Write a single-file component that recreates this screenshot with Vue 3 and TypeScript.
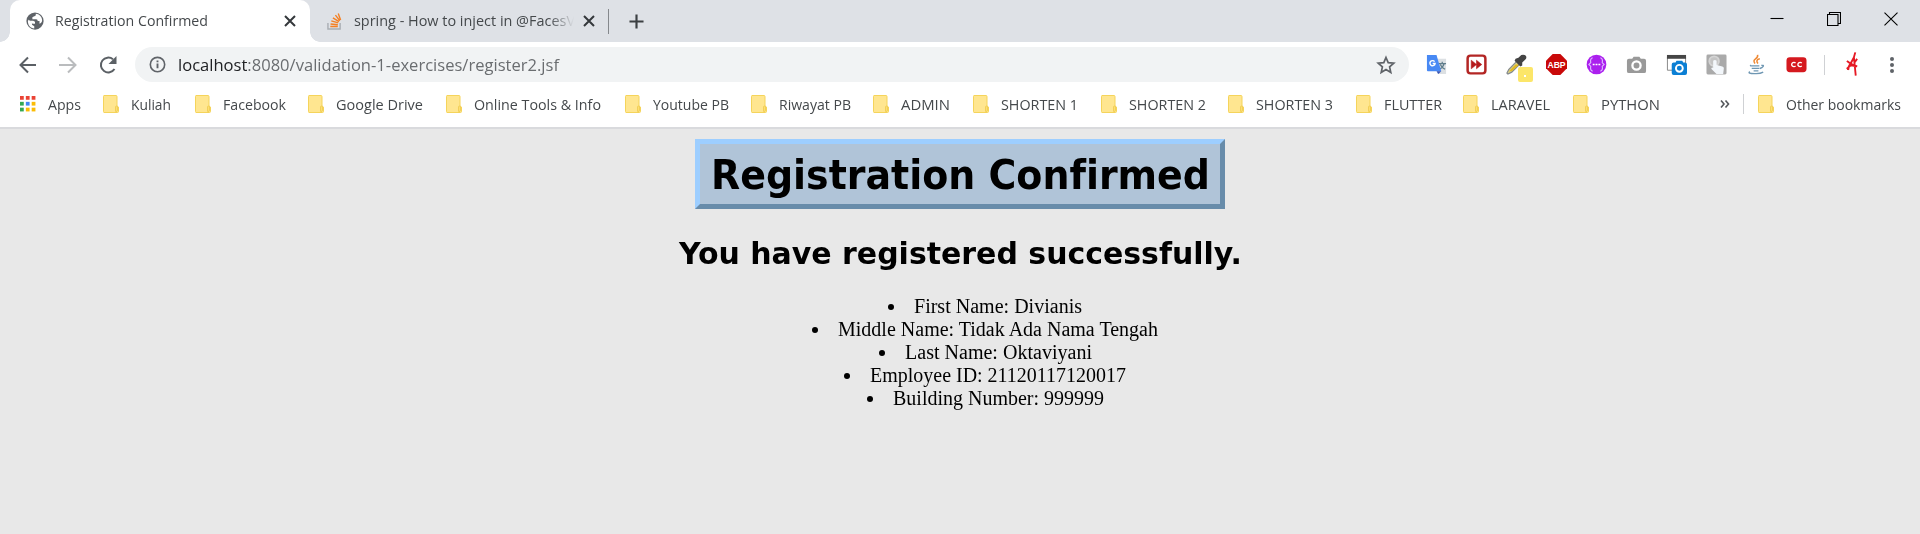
<script setup lang="ts">
interface Bookmark {
  label: string
  textWidth: number
  slot: number
}

interface Detail {
  label: string
  value: string
  width: number
}

const bookmarks: Bookmark[] = [
  { label: 'Kuliah', textWidth: 40, slot: 92 },
  { label: 'Facebook', textWidth: 63, slot: 113 },
  { label: 'Google Drive', textWidth: 87, slot: 138 },
  { label: 'Online Tools & Info', textWidth: 127, slot: 179 },
  { label: 'Youtube PB', textWidth: 76, slot: 126 },
  { label: 'Riwayat PB', textWidth: 72, slot: 122 },
  { label: 'ADMIN', textWidth: 49, slot: 100 },
  { label: 'SHORTEN 1', textWidth: 77, slot: 128 },
  { label: 'SHORTEN 2', textWidth: 77, slot: 127 },
  { label: 'SHORTEN 3', textWidth: 77, slot: 128 },
  { label: 'FLUTTER', textWidth: 58, slot: 107 },
  { label: 'LARAVEL', textWidth: 59, slot: 110 },
  { label: 'PYTHON', textWidth: 59, slot: 90 },
]

const details: Detail[] = [
  { label: 'First Name', value: 'Divianis', width: 168 },
  { label: 'Middle Name', value: 'Tidak Ada Nama Tengah', width: 320 },
  { label: 'Last Name', value: 'Oktaviyani', width: 187 },
  { label: 'Employee ID', value: '21120117120017', width: 256 },
  { label: 'Building Number', value: '999999', width: 211 },
]

const appColors = ['#ea4335', '#ea4335', '#ea4335', '#34a853', '#4285f4', '#fbbc05', '#34a853', '#fbbc05', '#fbbc05']

// Condenses or widens a label so that it fills the given width.
const vFit = {
  mounted(el: HTMLElement, binding: { value: number }) {
    const ratio = binding.value / el.getBoundingClientRect().width
    el.style.width = `${binding.value}px`
    el.style.transform = `scaleX(${ratio})`
  },
}
</script>

<template>
  <div class="window">
    <header class="tabs">
      <div class="tab active">
        <svg class="fav" viewBox="0 0 24 24"><circle cx="12" cy="12" r="11.500" fill="#5f6368" /><path d="M3 10.500 8 15v2l3 2v3C6 21.500 2.500 18 2.500 12zM13 2.200c.3 2-.2 3-2 3.300L8.500 7v2.500h5c1.700 0 2 1 2 2.500h2.500v3.500c2-.4 3.500-2 3.500-4.500C21.500 6 17.500 2.500 13 2.200zM9.500 11.500h-5l4.500 4h3v-2.500z" fill="#fff" /><path d="M3 10 9 15H5z" fill="#fff" /></svg>
        <span class="title"><span v-fit="153" class="fit">Registration Confirmed</span></span>
        <svg class="x" viewBox="0 0 12 12"><path d="m1 1 10 10M11 1 1 11" /></svg>
      </div>
      <div class="tab">
        <svg class="fav so" viewBox="0 0 16 18"><path d="M1 10.500V17h13v-6.500" fill="none" stroke="#a9aeb4" stroke-width="1.500" /><path d="M3.500 14.400h8M3.800 11.600l7.800.8M4.600 8.300l7.400 2.200M6.300 5.200l6.500 4M9 2.200l4.700 6M12 .5l2.500 7" fill="none" stroke="#f48024" stroke-width="1.500" /></svg>
        <span class="title faded"><span v-fit="221" class="fit">spring - How to inject in @FacesV</span></span>
        <svg class="x" viewBox="0 0 12 12"><path d="m1 1 10 10M11 1 1 11" /></svg>
      </div>
      <i class="tab-rule"></i>
      <svg class="plus" viewBox="0 0 16 16"><path d="M8 .5v15M.5 8h15" stroke="#3c4043" stroke-width="2.300" /></svg>
      <div class="controls">
        <svg viewBox="0 0 14 14"><path d="M.5 6.500h13" /></svg>
        <svg viewBox="0 0 14 14"><path d="M.5 2.500h10.500v11H.5zM2.500 2.500v-2h11v11H11" /></svg>
        <svg viewBox="0 0 14 14"><path d="m.5.700 13 12.600M13.500.700.5 13.300" /></svg>
      </div>
    </header>

    <div class="toolbar">
      <svg class="nav" viewBox="0 0 20 20"><path d="M18 10H3M10 2.500 2.500 10l7.500 7.500" fill="none" stroke="#5b6065" stroke-width="2" /></svg>
      <svg class="nav" viewBox="0 0 20 20"><path d="M1 10h16M10 2.500l7.500 7.500-7.500 7.500" fill="none" stroke="#babcbe" stroke-width="2" /></svg>
      <svg class="nav" viewBox="0 0 20 20"><path d="M16.500 14A7.400 7.400 0 1 1 15 4.300" fill="none" stroke="#5b6065" stroke-width="2" /><path d="M18.500 1v8h-8z" fill="#5b6065" /></svg>
      <div class="address">
        <svg class="info" viewBox="0 0 18 18"><circle cx="9" cy="9" r="7.600" fill="none" stroke="#5f6368" stroke-width="1.700" /><path d="M9 8v5M9 4.800v1.900" stroke="#5f6368" stroke-width="2" /></svg>
        <span class="url"><span v-fit="381" class="fit"><b>localhost</b>:8080/validation-1-exercises/register2.jsf</span></span>
        <svg class="star" viewBox="0 0 20 20"><path d="m10 2.500 2.200 5.200 5.600.5-4.200 3.700 1.200 5.500-4.800-2.900-4.800 2.900 1.200-5.500-4.200-3.700 5.600-.5z" fill="none" stroke="#5f6368" stroke-width="1.700" /></svg>
      </div>
      <div class="extensions">
        <svg viewBox="0 0 22 22"><path d="M10 5h11v16H12z" fill="#dce0e3" /><path d="M13 10h8M17 8v2M19 10c-1 4-3 5-5 6M15 11c1 3 3 4 5 5" fill="none" stroke="#607d8b" stroke-width="1.300" /><path d="M1 1h10l5 17H2q-1 0-1-1z" fill="#4889f4" /><path d="m11 18 5 0-3 3z" fill="#3754b8" /><path d="M9 8A2.700 2.700 0 1 0 9.500 10H7" fill="none" stroke="#fff" stroke-width="1.500" /></svg>
        <svg viewBox="0 0 22 22"><rect x="1.700" y="1.700" width="18.600" height="18.600" rx="3" fill="#fff" stroke="#b32624" stroke-width="2.600" /><path d="m5.500 6.500 5.500 4.500-5.500 4.500zM11 6.500l5.500 4.500-5.500 4.500z" fill="#b51b1d" stroke="#b51b1d" stroke-width=".6" /></svg>
        <div class="picker">
          <svg viewBox="0 0 22 22"><path d="m1 20 2-4 9-9 3 3-9 9-4 2z" fill="#ddd28a" stroke="#858b8d" stroke-width="1.300" /><path d="m3 18 7-7h4l-8 7z" fill="#e1ba22" /><path d="m10 5 3-1 3-3q3-1 5 1 1 3-1 4l-3 3v3l-2 1-6-6z" fill="#444" /></svg>
          <i class="badge"></i>
        </div>
        <svg viewBox="0 0 22 22"><path d="M7 0h8l7 7v8l-7 7H7l-7-7V7z" fill="#c90909" /><text x="11" y="15" text-anchor="middle" class="abp" textLength="19" lengthAdjust="spacingAndGlyphs">ABP</text></svg>
        <svg viewBox="0 0 22 22"><circle cx="11" cy="11" r="10.300" fill="#ab20ee" /><path d="M7 4Q4 5 5 9l-2 2 2 2Q4 17 7 18M15 4q3 1 2 5l2 2-2 2q1 4-2 5" fill="none" stroke="#dcb6ff" stroke-width="1.200" /><path d="M7 11h2M10 11h2M13 11h2" stroke="#fff" stroke-width="1.800" /></svg>
        <svg viewBox="0 0 22 22"><path d="M1 7q0-2 2-2h3.500L8 3h6l1.500 2H19q2 0 2 2v11q0 2-2 2H3q-2 0-2-2z" fill="#999" /><circle cx="11" cy="12" r="4.300" fill="#999" stroke="#fff" stroke-width="2.400" /></svg>
        <svg viewBox="0 0 22 22"><path d="M1.500 3h19v14h-19z" fill="#fff" stroke="#858585" stroke-width="1" /><path d="M1 1h20v4H1z" fill="#454545" /><path d="M6 11q0-2 2-2h2l1-2h6l1 2h2q2 0 2 2v9q0 2-2 2H8q-2 0-2-2z" fill="#0b7fd4" /><circle cx="14" cy="15" r="3.600" fill="#0b7fd4" stroke="#fff" stroke-width="2" /></svg>
        <svg viewBox="0 0 22 22"><rect x=".5" y=".5" width="21" height="21" rx="1.500" fill="#aaa" /><circle cx="8.500" cy="7.500" r="5" fill="#c4c4c4" stroke="#d4d4d4" stroke-width="2" /><path d="M7.500 7q1.800-1.500 3.600 0v4.500l6 1.500q1.800.5 1.600 2l-.7 6h-7l-5.500-5.500q.5-2 2-1z" fill="#f3f7fb" /></svg>
        <svg viewBox="0 0 22 22"><path d="M12 1q1 2-2 4t-.5 5M14.500 5q-5 1-2 5" fill="none" stroke="#ef8933" stroke-width="1.600" /><path d="M5 11.500q-1 1 1 1h8M6 15h8M8 17.700h5M16 12q3-.5 2 1t-3.500 2.200M4 18.500q-3 2 5 2 6 .3 9-1.500" fill="none" stroke="#6f97b3" stroke-width="1.400" /></svg>
        <svg viewBox="0 0 22 22"><rect x=".5" y="3.500" width="21" height="15.500" rx="3.500" fill="#d5191f" /><path d="M10 9.500a2.300 2.300 0 1 0 0 3M16.500 9.500a2.300 2.300 0 1 0 0 3" fill="none" stroke="#fff" stroke-width="1.400" /></svg>
      </div>
      <i class="rule"></i>
      <svg class="profile" viewBox="0 0 14 26"><path d="M10 0Q9 6 5.500 11T2 19M8.500 5l1 10 1 10M1 9q3 3 11 6l-7-1M6 13l-4.500 4 2 1.500M12 7l-3 4" fill="none" stroke="#e61924" stroke-width="2" /></svg>
      <svg class="menu" viewBox="0 0 6 18"><circle cx="3" cy="3" r="2" /><circle cx="3" cy="9" r="2" /><circle cx="3" cy="15" r="2" /></svg>
    </div>

    <nav class="bookmarks">
      <div class="apps">
        <svg viewBox="0 0 17 17"><rect v-for="(color, i) in appColors" :key="i" :x="(i % 3) * 6.200" :y="Math.floor(i / 3) * 6.200" width="4" height="4" :fill="color" /></svg>
        <span v-fit="33" class="fit">Apps</span>
      </div>
      <div v-for="item in bookmarks" :key="item.label" class="bookmark" :style="{ width: `${item.slot}px` }">
        <svg class="folder" viewBox="0 0 16 18"><path d="M1 .5h12q1 0 1 1V11l1.500 1v4.500q0 1-1 1H1q-.5 0-.5-1v-15Q.5.5 1 .5z" fill="#ffe690" stroke="#f5d45b" /><path d="M12.500 16.500V12q0-1 1-1t1 1v3q0 2-2 2" fill="#ffdf70" stroke="#edca50" stroke-width=".8" /></svg>
        <span v-fit="item.textWidth" class="fit">{{ item.label }}</span>
      </div>
      <svg class="more" viewBox="0 0 10 8"><path d="m1 .5 3 3.500-3 3.500M5.500.500l3 3.500-3 3.500" /></svg>
      <i class="rule"></i>
      <div class="bookmark other">
        <svg class="folder" viewBox="0 0 16 18"><path d="M1 .5h12q1 0 1 1V11l1.500 1v4.500q0 1-1 1H1q-.5 0-.5-1v-15Q.5.5 1 .5z" fill="#ffe690" stroke="#f5d45b" /><path d="M12.500 16.500V12q0-1 1-1t1 1v3q0 2-2 2" fill="#ffdf70" stroke="#edca50" stroke-width=".8" /></svg>
        <span v-fit="115" class="fit">Other bookmarks</span>
      </div>
    </nav>

    <main class="page">
      <h1><span v-fit="499" class="fit">Registration Confirmed</span></h1>
      <h2><span v-fit="563" class="fit">You have registered successfully.</span></h2>
      <ul>
        <li v-for="item in details" :key="item.label"><i></i><span v-fit="item.width" class="fit">{{ item.label }}: {{ item.value }}</span></li>
      </ul>
    </main>
  </div>
</template>

<style>
body {
  margin: 0;
  overflow: hidden;
}
</style>

<style scoped>
* {
  box-sizing: border-box;
}
.window {
  width: 1920px;
  height: 534px;
  background: #fff;
  font-family: "Open Sans", "Noto Sans", sans-serif;
  font-size: 14px;
  color: #44484b;
}
svg {
  display: block;
  flex: none;
}
.fit {
  display: inline-block;
  flex: none;
  white-space: nowrap;
  transform-origin: left center;
}
.tabs {
  display: flex;
  align-items: center;
  height: 42px;
  padding-left: 10px;
  background: #dee1e6;
}
.tab {
  display: flex;
  align-items: center;
  width: 300px;
  height: 42px;
  padding-left: 16px;
}
.tab + .tab {
  width: 298px;
}
.active {
  background: #fff;
  border-radius: 10px 10px 0 0;
  position: relative;
}
.active::before,
.active::after {
  content: "";
  position: absolute;
  bottom: 0;
  width: 10px;
  height: 10px;
}
.active::before {
  left: -10px;
  background: radial-gradient(circle at 0 0, #dee1e6 9.5px, #fff 10px);
}
.active::after {
  right: -10px;
  background: radial-gradient(circle at 100% 0, #dee1e6 9.5px, #fff 10px);
}
.fav {
  width: 18px;
  height: 18px;
}
.so {
  width: 15px;
  height: 17px;
  margin-left: 1px;
}
.title {
  width: 221px;
  height: 20px;
  line-height: 20px;
  margin: 0 8px 0 12px;
  overflow: hidden;
}
.active .title {
  width: 224px;
  margin: 0 5px 0 11px;
}
.faded {
  mask-image: linear-gradient(to right, #000 195px, transparent 220px);
}
.x {
  width: 12px;
  height: 12px;
  stroke: #34383b;
  stroke-width: 2;
}
.tab-rule {
  width: 1px;
  height: 25px;
  background: #85888c;
}
.plus {
  width: 15px;
  height: 15px;
  margin-left: 20px;
}
.controls {
  display: flex;
  gap: 43px;
  margin: -5px 22px 0 auto;
}
.controls svg {
  width: 14px;
  height: 14px;
  fill: none;
  stroke: #000;
  stroke-width: 1.1;
}
.toolbar {
  display: flex;
  align-items: center;
  height: 45px;
  padding-left: 18px;
}
.nav {
  width: 20px;
  height: 20px;
  margin-right: 20px;
}
.nav:nth-child(3) {
  margin-right: 17px;
}
.address {
  display: flex;
  align-items: center;
  width: 1274px;
  height: 35px;
  padding: 0 13px 0 14px;
  border-radius: 18px;
  background: #f1f3f4;
}
.info {
  width: 17px;
  height: 17px;
}
.url {
  margin-left: 12px;
  font-size: 17px;
  line-height: 30px;
  color: #6a6d70;
}
.url b {
  color: #202124;
  font-weight: 400;
}
.star {
  width: 20px;
  height: 20px;
  margin-left: auto;
}
.extensions {
  display: flex;
  gap: 19px;
  margin-left: 17px;
}
.extensions svg {
  width: 21px;
  height: 21px;
}
.picker {
  position: relative;
}
.badge {
  position: absolute;
  left: 12px;
  top: 13px;
  width: 15px;
  height: 15px;
  border: solid #fce669;
  border-width: 8px 7px 5px 6px;
  border-radius: 2px;
  background: #fff;
}
.abp {
  font: bold 10px "Liberation Sans", sans-serif;
  fill: #fff;
}
.rule {
  flex: none;
  width: 1px;
  height: 20px;
  background: #cfd1d4;
}
.toolbar .rule {
  margin: 0 21px 0 17px;
}
.profile {
  width: 13px;
  height: 25px;
}
.menu {
  width: 6px;
  height: 18px;
  margin-left: 30px;
  fill: #5f6368;
}
.bookmarks {
  display: flex;
  align-items: center;
  height: 42px;
  padding: 0 0 6px 20px;
  border-bottom: 2px solid #d9dadd;
}
.apps {
  display: flex;
  align-items: center;
  gap: 12px;
  width: 83px;
}
.apps svg {
  width: 16px;
  height: 16px;
}
.bookmark {
  display: flex;
  align-items: center;
  flex: none;
  gap: 12px;
}
.folder {
  width: 16px;
  height: 18px;
}
.more {
  width: 10px;
  height: 8px;
  margin: 0 13px 0 57px;
  fill: none;
  stroke: #55585c;
  stroke-width: 1.6;
}
.bookmarks .rule {
  margin-right: 14px;
}
.page {
  display: flex;
  flex-direction: column;
  align-items: center;
  height: 405px;
  padding-top: 10px;
  background: #e8e8e8;
  color: #000;
}
h1,
h2 {
  margin: 0;
  font-family: Verdana, "DejaVu Sans", sans-serif;
  font-weight: 700;
  font-variant-ligatures: none;
}
h1 {
  width: 530px;
  height: 70px;
  padding-left: 11px;
  border: 5px solid;
  border-color: #9dceff #688caa #688caa #9dceff;
  background: #b0c4d8;
  font-size: 40px;
  line-height: 62px;
}
h2 {
  margin-top: 27px;
  font-size: 29.5px;
  line-height: 36px;
}
ul {
  width: 1920px;
  margin: 23px 0 0;
  padding: 0 0 0 50px;
  list-style: none;
  font: 20px/23px "Liberation Serif", serif;
}
li {
  display: flex;
  align-items: center;
  justify-content: center;
  gap: 20px;
}
li i {
  width: 6px;
  height: 6px;
  border-radius: 50%;
  background: #000;
}
</style>
